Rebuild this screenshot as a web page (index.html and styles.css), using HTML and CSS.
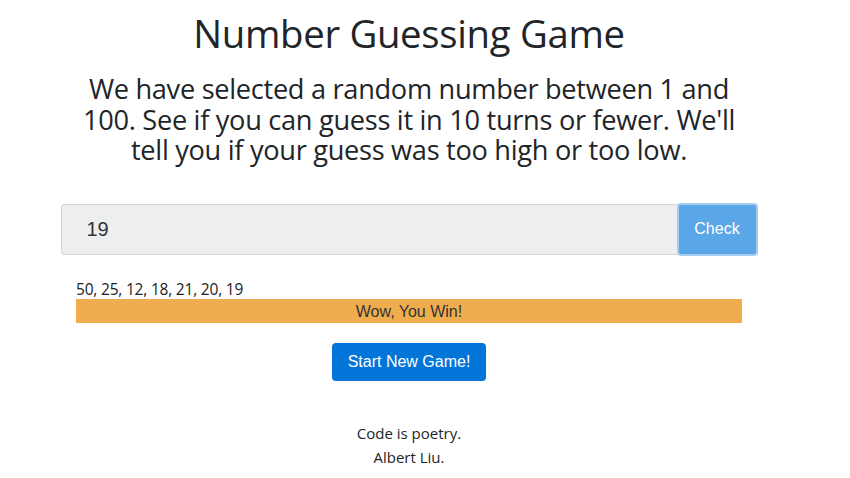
FILE: index.html
```html
<!DOCTYPE html>
<html>
<head>
<meta charset="utf-8">
<title>Number Guessing Game</title>
<link rel="stylesheet" href="styles.css">
</head>
<body>
<div class="page">
  <h1 class="title">Number Guessing Game</h1>
  <p class="intro">We have selected a random number between 1 and 100. See if you can guess it in 10 turns or fewer. We'll tell you if your guess was too high or too low.</p>
  <div class="guess-row">
    <div class="guess-input">19</div>
    <button class="check-btn">Check</button>
  </div>
  <div class="results">
    <div class="history">50, 25, 12, 18, 21, 20, 19</div>
    <div class="status">Wow, You Win!</div>
  </div>
  <div class="actions">
    <button class="new-btn">Start New Game!</button>
  </div>
  <footer class="footer">
    <div>Code is poetry.</div>
    <div>Albert Liu.</div>
  </footer>
</div>
</body>
</html>
```
FILE: styles.css
```css
html, body {
  margin: 0;
  padding: 0;
  background: #fff;
}
.page {
  width: 818px;
  display: flex;
  flex-direction: column;
  align-items: center;
  font-family: "Open Sans", "Noto Sans", sans-serif;
  color: #212529;
}
.title {
  margin: 11px 0 0 0;
  font-weight: 400;
  font-size: 38.3px;
  line-height: 44px;
  letter-spacing: -0.3px;
}
.intro {
  width: 680px;
  margin: 19px 0 0 0;
  text-align: center;
  font-size: 27.2px;
  line-height: 30.5px;
  letter-spacing: -0.3px;
}
.guess-row {
  margin-top: 37px;
  width: 697px;
  display: flex;
  align-items: center;
}
.guess-input {
  flex: 1;
  box-sizing: border-box;
  height: 51px;
  background: #edeef0;
  border: 1px solid #d4d5d7;
  border-right: none;
  border-radius: 4px 0 0 4px;
  padding-left: 25px;
  display: flex;
  align-items: center;
  font-family: "Liberation Sans", Arial, sans-serif;
  font-size: 20px;
  color: #333;
}
.check-btn {
  box-sizing: border-box;
  width: 81px;
  height: 53px;
  background: #5ba6e6;
  border: 2px solid #a4cdf2;
  border-radius: 4px;
  color: #fff;
  font-family: "Liberation Sans", Arial, sans-serif;
  font-size: 16px;
  padding: 0;
}
.results {
  margin-top: 23px;
  width: 666px;
  display: flex;
  flex-direction: column;
}
.history {
  font-size: 15.5px;
  line-height: 20px;
  color: #222;
  letter-spacing: -0.2px;
}
.status {
  height: 24px;
  background: #f0ad4e;
  text-align: center;
  font-family: "Liberation Sans", Arial, sans-serif;
  font-size: 16px;
  line-height: 26px;
  color: #333;
}
.actions {
  margin-top: 20px;
}
.new-btn {
  width: 154px;
  height: 38px;
  background: #0275d8;
  border: none;
  border-radius: 4px;
  color: #fff;
  font-family: "Liberation Sans", Arial, sans-serif;
  font-size: 16px;
  padding: 0;
}
.footer {
  margin-top: 40px;
  text-align: center;
  font-size: 15px;
  line-height: 24px;
  color: #212529;
}
```
